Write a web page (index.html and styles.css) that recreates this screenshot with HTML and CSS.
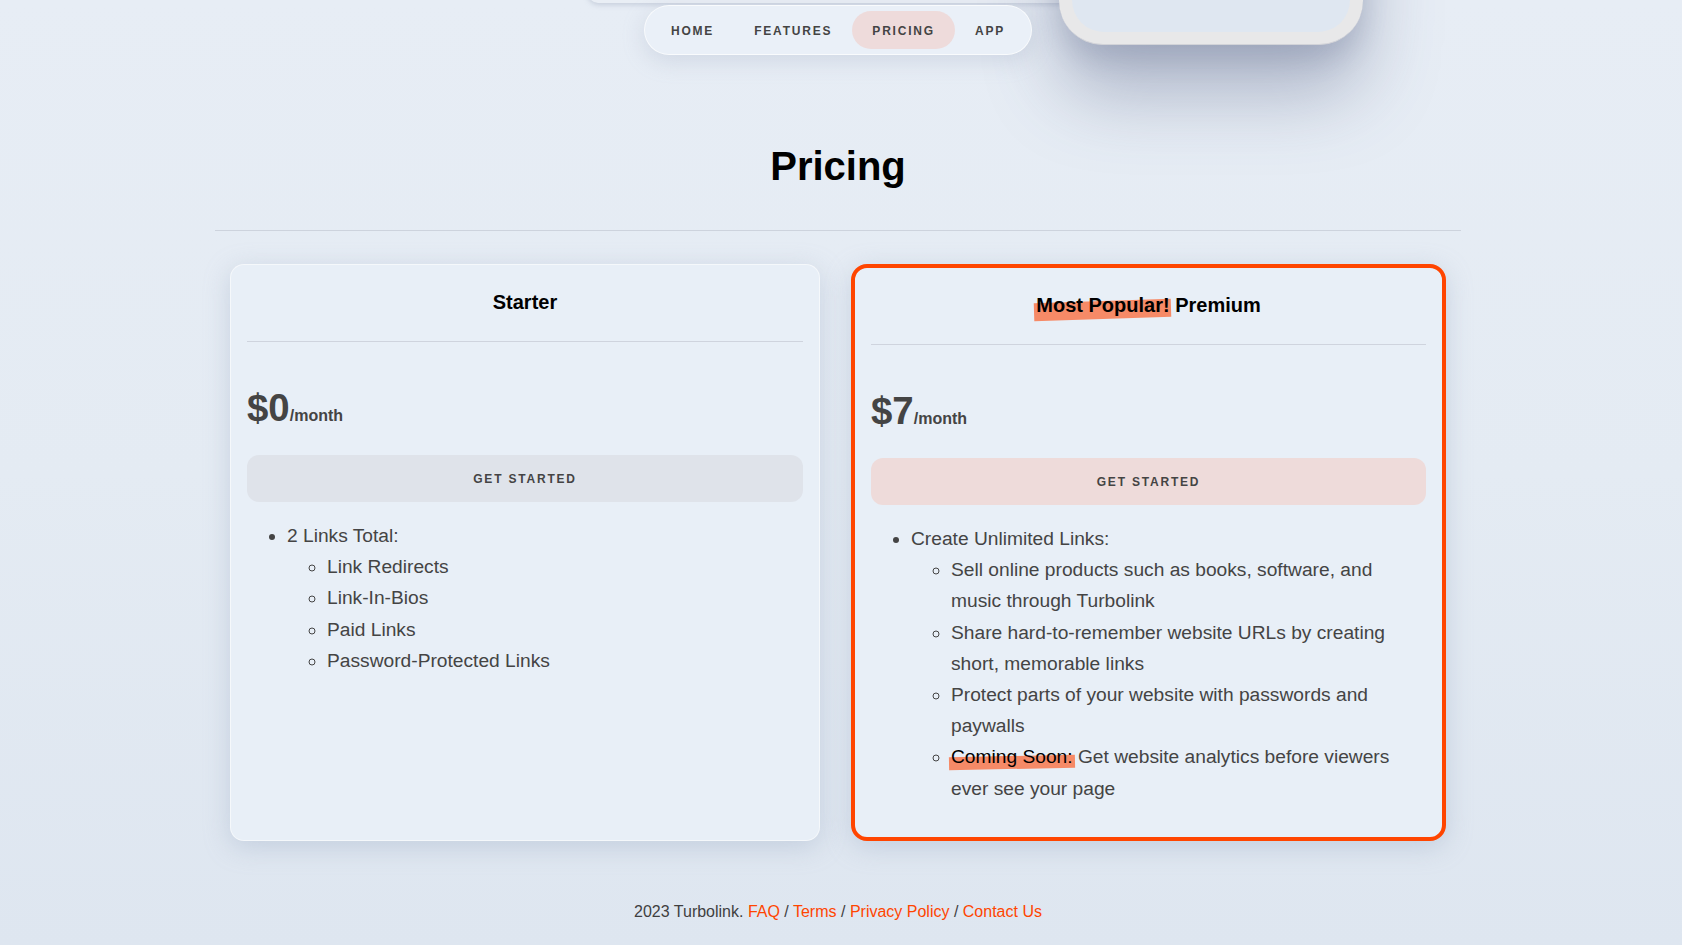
FILE: index.html
```html
<!DOCTYPE html>
<html lang="en">
<head>
<meta charset="utf-8">
<title>Turbolink – Pricing</title>
<link rel="stylesheet" href="styles.css">
</head>
<body>
<div class="page">
  <div class="top-strip"></div>
  <div class="phone"><div class="phone-screen"></div></div>

  <header class="header">
    <nav class="nav">
      <a class="nav-item" href="#">HOME</a>
      <a class="nav-item" href="#">FEATURES</a>
      <a class="nav-item active" href="#">PRICING</a>
      <a class="nav-item" href="#">APP</a>
    </nav>
  </header>

  <main class="container">
    <h1 class="title">Pricing</h1>
    <hr class="rule">

    <section class="plans">
      <article class="card">
        <h3 class="card-title">Starter</h3>
        <hr class="card-rule">
        <div class="price"><span class="amount">$0</span><span class="per">/month</span></div>
        <button class="btn">GET STARTED</button>
        <ul class="features">
          <li>2 Links Total:
            <ul>
              <li>Link Redirects</li>
              <li>Link-In-Bios</li>
              <li>Paid Links</li>
              <li>Password-Protected Links</li>
            </ul>
          </li>
        </ul>
      </article>

      <article class="card card-featured">
        <h3 class="card-title"><span class="mark">Most Popular!</span> Premium</h3>
        <hr class="card-rule">
        <div class="price"><span class="amount">$7</span><span class="per">/month</span></div>
        <button class="btn btn-featured">GET STARTED</button>
        <ul class="features">
          <li>Create Unlimited Links:
            <ul>
              <li>Sell online products such as books, software, and music through Turbolink</li>
              <li>Share hard-to-remember website URLs by creating short, memorable links</li>
              <li>Protect parts of your website with passwords and paywalls</li>
              <li><span class="mark">Coming Soon:</span> Get website analytics before viewers ever see your page</li>
            </ul>
          </li>
        </ul>
      </article>
    </section>
  </main>

  <footer class="footer">
    2023 Turbolink. <a href="#">FAQ</a> / <a href="#">Terms</a> / <a href="#">Privacy Policy</a> / <a href="#">Contact Us</a>
  </footer>
</div>
</body>
</html>
```

FILE: styles.css
```css
* { box-sizing: border-box; }

html, body {
  margin: 0;
  padding: 0;
  height: 945px;
  overflow: hidden;
}

body {
  font-family: "Liberation Sans", Arial, sans-serif;
  color: #444;
  background: linear-gradient(180deg, #e7edf5 0%, #e4ebf3 50%, #dee6f0 100%);
}

.page {
  position: relative;
  min-height: 945px;
  padding-right: 6px;
}

/* decorative top pieces */
.top-strip {
  position: absolute;
  left: 588px;
  top: -40px;
  width: 490px;
  height: 43px;
  background: #e9eef5;
  border-radius: 0 0 10px 10px;
  box-shadow: 0 2px 5px rgba(140, 152, 175, 0.35);
}

.phone {
  position: absolute;
  left: 1059px;
  top: -300px;
  width: 304px;
  height: 345px;
  border-radius: 0 0 44px 44px;
  background: #e8e8e9;
  border-bottom: 1px solid #d2d3d8;
  padding: 0 13px 12px;
  box-shadow: 0 48px 75px rgba(70, 80, 120, 0.36), 0 14px 26px rgba(70, 80, 120, 0.16);
  z-index: 2;
}

.phone-screen {
  width: 100%;
  height: 100%;
  background: #dfe7f1;
  border-radius: 0 0 32px 32px;
}

/* nav */
.header {
  display: flex;
  justify-content: center;
  padding-top: 5px;
}

.nav {
  display: flex;
  align-items: center;
  padding: 5px 6px;
  background: #eaf0f8;
  border: 1px solid rgba(255, 255, 255, 0.7);
  border-radius: 26px;
  box-shadow: 0 6px 22px rgba(150, 162, 185, 0.28);
  position: relative;
  z-index: 3;
}

.nav-item {
  display: flex;
  align-items: center;
  height: 38px;
  padding: 1px 20px 0;
  border-radius: 20px;
  font-size: 12px;
  font-weight: 700;
  letter-spacing: 0.15em;
  color: #444;
  text-decoration: none;
}

.nav-item.active {
  background: #eedbdb;
}

/* main */
.container {
  width: 1246px;
  margin: 0 auto;
}

.title {
  margin: 88px 0 41px;
  font-size: 40px;
  line-height: 46px;
  font-weight: 700;
  text-align: center;
  color: #000;
}

.rule {
  margin: 0;
  border: 0;
  border-top: 1px solid #cdd3dd;
}

.plans {
  display: grid;
  grid-template-columns: 590px 595px;
  gap: 31px;
  padding: 0 15px;
  margin-top: 33px;
}

.card {
  background: #e8eff7;
  border: 1px solid rgba(255, 255, 255, 0.55);
  border-radius: 14px;
  padding: 16px 16px 14px;
  box-shadow: 0 6px 26px rgba(150, 165, 192, 0.38);
}

.card-featured {
  border: 4px solid #ff4500;
  border-radius: 16px;
}

.card-title {
  margin: 10px 0 0;
  font-size: 20px;
  line-height: 23px;
  font-weight: 700;
  text-align: center;
  color: #000;
}

.card-rule {
  margin: 27px 0 0;
  border: 0;
  border-top: 1px solid #cfd4de;
}

.price {
  margin-top: 44px;
  line-height: 44px;
  color: #444;
  font-weight: 700;
}

.amount {
  font-size: 38.4px;
}

.per {
  font-size: 16px;
}

.btn {
  display: block;
  width: 100%;
  height: 47px;
  margin-top: 17px;
  border: 0;
  border-radius: 12px;
  background: #dfe3ea;
  font-family: "Liberation Sans", Arial, sans-serif;
  font-size: 12px;
  font-weight: 700;
  letter-spacing: 0.15em;
  color: #444;
}

.btn-featured {
  background: #eedbda;
}

.features {
  margin: 18px 0 19px;
  padding-left: 40px;
  font-size: 19.2px;
  line-height: 31.2px;
  color: #444;
}

.features ul {
  margin: 0;
  padding-left: 40px;
}

.mark {
  position: relative;
  z-index: 0;
  color: #000;
}

.mark::before {
  content: "";
  position: absolute;
  left: -2px;
  right: -2px;
  top: 0.35em;
  bottom: -0.15em;
  background: #f68a67;
  transform: rotate(-1.8deg);
  z-index: -1;
}

.features .mark::before {
  top: 0.5em;
  bottom: -0.1em;
  transform: rotate(-1.2deg);
}

/* footer */
.footer {
  margin-top: 62px;
  text-align: center;
  font-size: 16px;
  line-height: 18px;
  color: #3f3f3f;
}

.footer a {
  color: #ff4500;
  text-decoration: none;
}
```
